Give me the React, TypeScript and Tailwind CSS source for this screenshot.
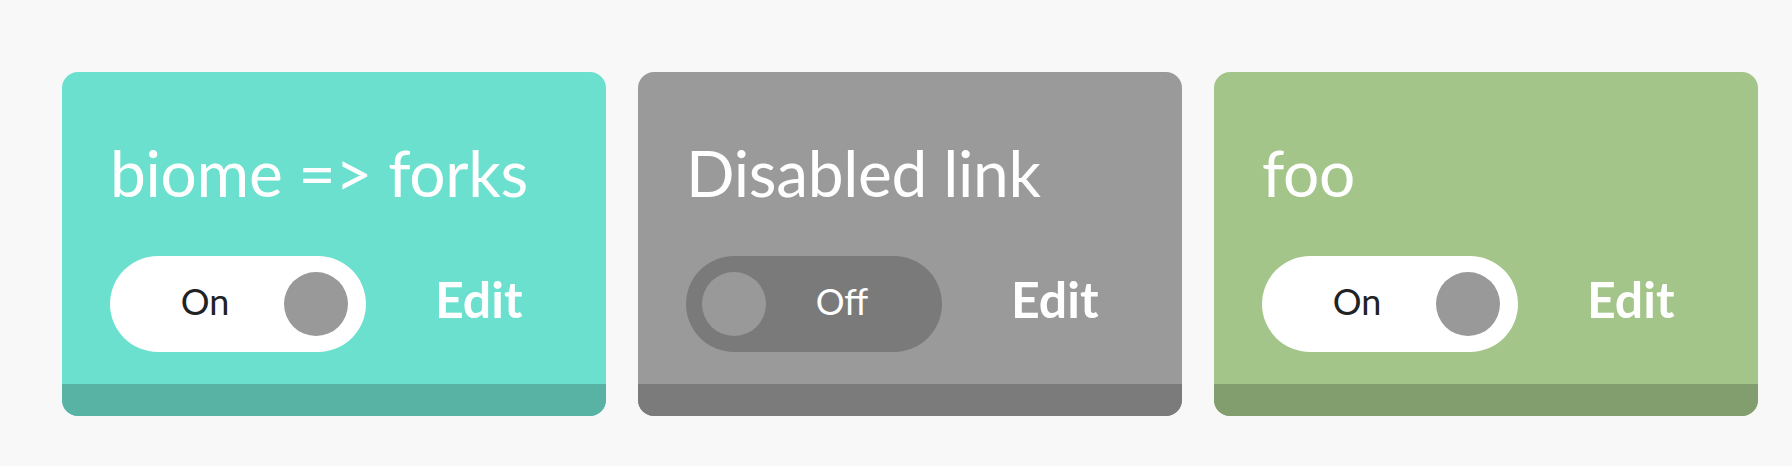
import React from "react";

type Card = {
  title: string;
  on: boolean;
  bg: string;
  foot: string;
};

const cards: Card[] = [
  { title: "biome => forks", on: true, bg: "bg-[#6ce0ce]", foot: "bg-[#59b3a5]" },
  { title: "Disabled link", on: false, bg: "bg-[#9a9a9a]", foot: "bg-[#7b7b7b]" },
  { title: "foo", on: true, bg: "bg-[#a3c589]", foot: "bg-[#829e6e]" },
];

function Toggle({ on }: { on: boolean }) {
  if (on) {
    return (
      <div className="w-[256px] h-24 rounded-full bg-white flex items-center">
        <span className="flex-1 text-center pl-4 pb-[6px] text-[36px] leading-none text-[#222]">On</span>
        <span className="w-16 h-16 rounded-full bg-[#999999] mr-[18px]" />
      </div>
    );
  }
  return (
    <div className="w-[256px] h-24 rounded-full bg-[#7a7a7a] flex items-center">
      <span className="w-16 h-16 rounded-full bg-[#999999] ml-4" />
      <span className="flex-1 text-center pr-6 pb-[6px] text-[36px] leading-none text-white">Off</span>
    </div>
  );
}

export default function App() {
  return (
    <div className="h-[466px] bg-[#f8f8f8] pt-[72px] pl-[62px] flex gap-8 font-['Lato',sans-serif]">
      {cards.map((c) => (
        <div key={c.title} className={`w-[544px] h-[344px] rounded-2xl overflow-hidden flex flex-col ${c.bg}`}>
          <div className="flex-1 px-12">
            <h2 className="pt-[69px] text-[64px] leading-none tracking-[-0.3px] text-white">{c.title}</h2>
            <div className="mt-[51px] flex items-center">
              <Toggle on={c.on} />
              <a className="ml-[69px] mb-[10px] text-[50px] leading-none font-bold text-white">Edit</a>
            </div>
          </div>
          <div className={`h-8 ${c.foot}`} />
        </div>
      ))}
    </div>
  );
}
